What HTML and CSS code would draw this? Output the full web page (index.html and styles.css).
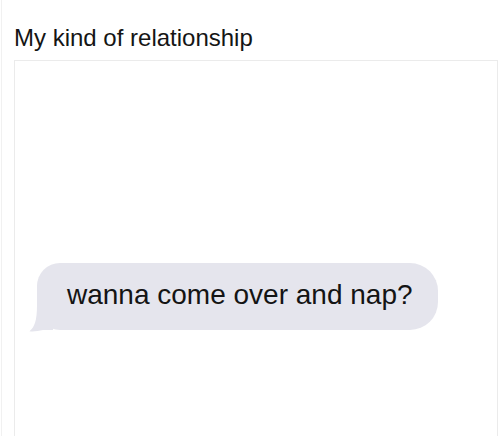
FILE: index.html
```html
<!DOCTYPE html>
<html>
<head>
<meta charset="utf-8">
<link rel="stylesheet" href="styles.css">
</head>
<body>
<div class="page">
  <h1 class="title">My kind of relationship</h1>
  <div class="card">
    <div class="bubble">wanna come over and nap?<svg class="tail" width="24" height="27" viewBox="0 0 24 27"><path d="M8 0 L24 0 L24 25 L14 25 C9 26.2 4.5 26.8 0.5 26.3 C5.5 22 8 16 8 0 Z" fill="#e5e5ed"/></svg></div>
  </div>
</div>
</body>
</html>
```
FILE: styles.css
```css
html, body {
  margin: 0;
  padding: 0;
  background: #ffffff;
  height: 100%;
  overflow: hidden;
}
.page {
  margin-left: 1px;
  border-left: 1px solid #f1f1f1;
  padding-left: 12px;
  height: 100%;
  box-sizing: border-box;
  font-family: "Liberation Sans", Arial, sans-serif;
  color: #151515;
}
.title {
  margin: 0;
  padding: 24px 0 0 0;
  font-size: 24px;
  line-height: 28px;
  font-weight: normal;
  height: 36px;
}
.card {
  margin-right: 2px;
  border: 1px solid #ebebeb;
  height: 376px;
  border-bottom: none;
  padding: 202px 0 0 22px;
  box-sizing: border-box;
}
.bubble {
  position: relative;
  display: inline-block;
  background: #e5e5ed;
  border-radius: 23px 28px 28px 23px;
  padding: 16px 25px 19px 30px;
  font-size: 28px;
  line-height: 32px;
  color: #141414;
}
.tail {
  position: absolute;
  left: -8px;
  bottom: -2px;
  display: block;
}
```
